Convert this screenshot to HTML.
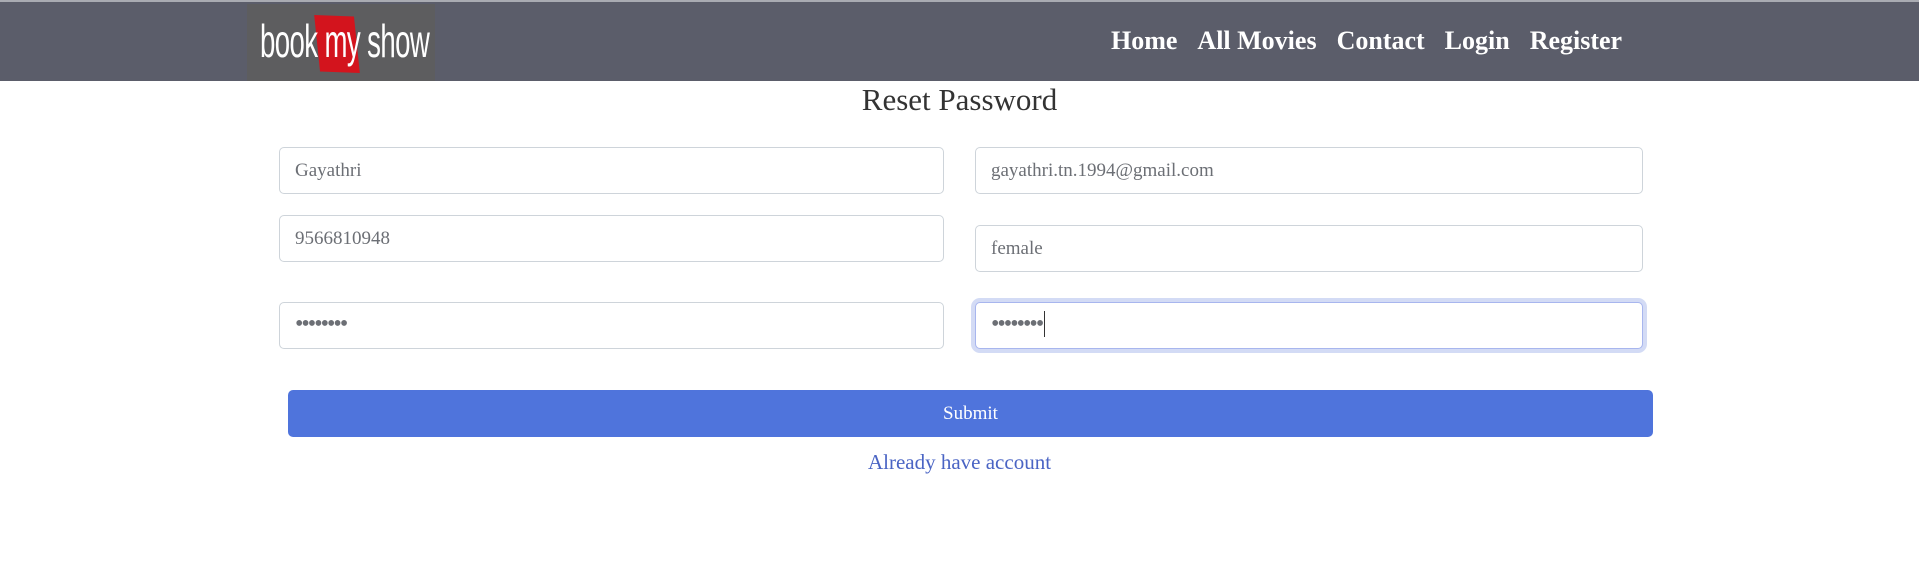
<!DOCTYPE html>
<html><head><meta charset="utf-8"><style>
*{box-sizing:border-box;margin:0;padding:0}
body{width:1919px;height:575px;background:#fff;position:relative;overflow:hidden;font-family:"Liberation Serif",serif}
.nav{position:absolute;left:0;top:0;width:1919px;height:81px;background:#5b5d6a;border-top:2px solid #a9abb2}
.logo{position:absolute;left:247px;top:2px;width:188px;height:77px;background:#5d5d5f}
.logo .red{position:absolute;left:70px;top:12px;width:40px;height:56px;background:#d3141d;transform:skewY(8deg) rotate(-6deg)}
.logo .t{position:absolute;left:13px;top:14px;font-family:"Liberation Sans Narrow","Liberation Sans",sans-serif;font-size:46px;color:#fff;line-height:46px;transform:scaleX(.6);transform-origin:0 0;white-space:nowrap;letter-spacing:-1px}
.links{position:absolute;left:1111px;top:24px;font-weight:bold;font-size:26px;color:#fff;white-space:nowrap}
.links span{margin-right:20px}
h1{position:absolute;left:0;width:1919px;top:82px;text-align:center;font-weight:normal;font-size:31px;color:#333}
.in{position:absolute;border:1px solid #ced4da;border-radius:5px;height:47px;font-size:19px;color:#6c6f75;padding:12px 15px;line-height:22px;background:#fff}
.pw{font-size:24px;letter-spacing:-2px;padding-top:10px}
.foc{border-color:#a8b6ee;box-shadow:0 0 0 4px #d3dbf5}
.btn{position:absolute;left:288px;top:390px;width:1365px;height:47px;background:#4f74dc;border-radius:5px;color:#fff;font-size:19px;text-align:center;line-height:47px}
.lk{position:absolute;left:0;width:1919px;top:450px;text-align:center;color:#4a64c4;font-size:21px}
</style></head><body>
<div class="nav">
 <div class="logo"><div class="red"></div><div class="t">book my show</div></div>
 <div class="links"><span>Home</span><span>All Movies</span><span>Contact</span><span>Login</span><span>Register</span></div>
</div>
<h1>Reset Password</h1>
<div class="in" style="left:279px;top:147px;width:665px">Gayathri</div>
<div class="in" style="left:975px;top:147px;width:668px">gayathri.tn.1994@gmail.com</div>
<div class="in" style="left:279px;top:215px;width:665px">9566810948</div>
<div class="in" style="left:975px;top:225px;width:668px">female</div>
<div class="in pw" style="left:279px;top:302px;width:665px">••••••••</div>
<div class="in foc pw" style="left:975px;top:302px;width:668px">••••••••<span style="border-left:1px solid #333;margin-left:2px"></span></div>
<div class="btn">Submit</div>
<div class="lk">Already have account</div>
</body></html>
